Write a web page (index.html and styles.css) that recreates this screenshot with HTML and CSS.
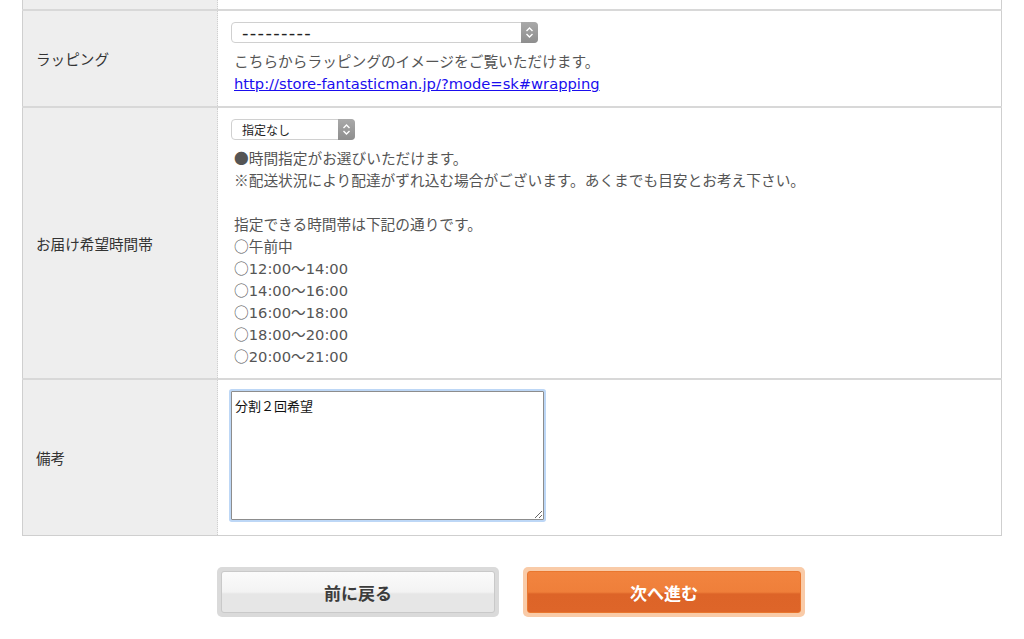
FILE: index.html
```html
<!DOCTYPE html>
<html lang="ja">
<head>
    <meta charset="UTF-8">
    <meta name="viewport" content="width=device-width, initial-scale=1.0">
    <title>お届け先情報</title>
    <link rel="stylesheet" href="styles.css">
</head>
<body>
    <div class="order-container">
        <table class="order-table">
            <tr class="row-prev">
                <th></th>
                <td></td>
            </tr>
            <tr>
                <th>ラッピング</th>
                <td>
                    <div class="select-wrap select-wide">
                        <select name="wrapping" class="select-dash">
                            <option>---------</option>
                        </select>
                        <span class="select-arrow">
                            <svg width="9" height="13" viewBox="0 0 9 13"><path d="M1.5 5 L4.5 2 L7.5 5 M1.5 8 L4.5 11 L7.5 8" fill="none" stroke="#fff" stroke-width="1.4"/></svg>
                        </span>
                    </div>
                    <p class="note">こちらからラッピングのイメージをご覧いただけます。<br>
                    <a href="#wrapping" class="en">http://store-fantasticman.jp/?mode=sk#wrapping</a></p>
                </td>
            </tr>
            <tr>
                <th>お届け希望時間帯</th>
                <td class="time-cell">
                    <div class="select-wrap select-small">
                        <select name="delivery_time">
                            <option>指定なし</option>
                        </select>
                        <span class="select-arrow">
                            <svg width="9" height="13" viewBox="0 0 9 13"><path d="M1.5 5 L4.5 2 L7.5 5 M1.5 8 L4.5 11 L7.5 8" fill="none" stroke="#fff" stroke-width="1.4"/></svg>
                        </span>
                    </div>
                    <p class="note">●時間指定がお選びいただけます。<br>
                    ※配送状況により配達がずれ込む場合がございます。あくまでも目安とお考え下さい。<br>
                    <br>
                    指定できる時間帯は下記の通りです。<br>
                    ○午前中<br>
                    ○<span class="en">12:00</span>～<span class="en">14:00</span><br>
                    ○<span class="en">14:00</span>～<span class="en">16:00</span><br>
                    ○<span class="en">16:00</span>～<span class="en">18:00</span><br>
                    ○<span class="en">18:00</span>～<span class="en">20:00</span><br>
                    ○<span class="en">20:00</span>～<span class="en">21:00</span></p>
                </td>
            </tr>
            <tr>
                <th>備考</th>
                <td>
                    <textarea name="memo" class="memo">分割２回希望</textarea>
                </td>
            </tr>
        </table>

        <div class="button-row">
            <button type="button" class="btn btn-back"><span>前に戻る</span></button>
            <button type="submit" class="btn btn-next"><span>次へ進む</span></button>
        </div>
    </div>
</body>
</html>
```

FILE: styles.css
```css
body {
    font-family: "Noto Sans CJK JP", sans-serif;
    background-color: #fff;
    margin: 0;
    color: #333;
}
.order-container {
    width: 980px;
    margin: 0 auto;
}
.order-table {
    width: 100%;
    border-collapse: collapse;
    border: 1px solid #cfcfcf;
    border-top: none;
}
.order-table th,
.order-table td {
    border-top: 2px solid #d8d8d8;
    vertical-align: middle;
    text-align: left;
}
.order-table th {
    width: 181px;
    background-color: #eee;
    border-right: 1px dotted #cfcfcf;
    padding: 0 0 0 13px;
    font-size: 14.6px;
    font-weight: normal;
    color: #333;
}
.order-table td {
    padding: 11px 13px 12px 16px;
    background-color: #fff;
}
.order-table .time-cell {
    padding-bottom: 11px;
}
.order-table .row-prev th,
.order-table .row-prev td {
    border-top: none;
    height: 9px;
    padding: 0;
}
.select-wrap {
    position: relative;
    height: 21px;
    margin: 0 0 7px -3px;
}
.select-wide {
    width: 307px;
}
.select-small {
    width: 124px;
}
.select-wrap select {
    display: block;
    appearance: none;
    -webkit-appearance: none;
    width: 100%;
    height: 21px;
    margin: 0;
    padding: 0 0 0 10px;
    border: 1px solid #d0d0d0;
    border-radius: 4px;
    background: #fff;
    font-family: "Noto Sans CJK JP", sans-serif;
    font-size: 12px;
    line-height: 19px;
    color: #222;
}
.select-wrap .select-dash {
    font-family: "DejaVu Sans", sans-serif;
    font-size: 18px;
    letter-spacing: 1.3px;
}
.select-arrow {
    position: absolute;
    top: 0;
    right: 0;
    width: 17px;
    height: 21px;
    border-radius: 0 4px 4px 0;
    background: linear-gradient(#a9a9a9, #8e8e8e);
    display: flex;
    align-items: center;
    justify-content: center;
    pointer-events: none;
}
.note {
    margin: 0;
    font-size: 14.7px;
    line-height: 22px;
    color: #555;
}
.note .en {
    font-family: "DejaVu Sans", sans-serif;
    line-height: 18px;
}
.note a {
    color: #1a0dee;
}
.memo {
    display: block;
    box-sizing: border-box;
    width: 313px;
    height: 129px;
    margin: 0 0 3px -3px;
    padding: 5px 3px;
    border: 1px solid #8d8d8d;
    border-radius: 1px;
    box-shadow: 0 0 0 2px #bdd7f6;
    outline: none;
    font-family: "Noto Sans CJK JP", sans-serif;
    font-size: 13px;
    line-height: 18px;
    color: #111;
    resize: both;
}
.button-row {
    display: flex;
    justify-content: center;
    gap: 24px;
    margin-top: 31px;
    padding-right: 2px;
}
.btn {
    box-sizing: border-box;
    width: 282px;
    height: 50px;
    padding: 4px;
    border: none;
    border-radius: 5px;
    cursor: pointer;
    font-family: "Noto Sans CJK JP", sans-serif;
    font-size: 17px;
    font-weight: bold;
}
.btn span {
    display: flex;
    align-items: center;
    justify-content: center;
    height: 100%;
    box-sizing: border-box;
    border-radius: 3px;
}
.btn-back {
    background-color: #dadada;
}
.btn-back span {
    border: 1px solid #c9c9c9;
    background: linear-gradient(#fbfbfb 0%, #f3f3f3 50%, #e6e6e6 55%, #e6e6e6 100%);
    color: #3c3c3c;
}
.btn-next {
    background-color: #f9cba8;
}
.btn-next span {
    border: 1px solid #e9772f;
    background: linear-gradient(#f2843f 0%, #ef7f3a 50%, #dd6428 55%, #de6529 100%);
    color: #fff;
}
```
